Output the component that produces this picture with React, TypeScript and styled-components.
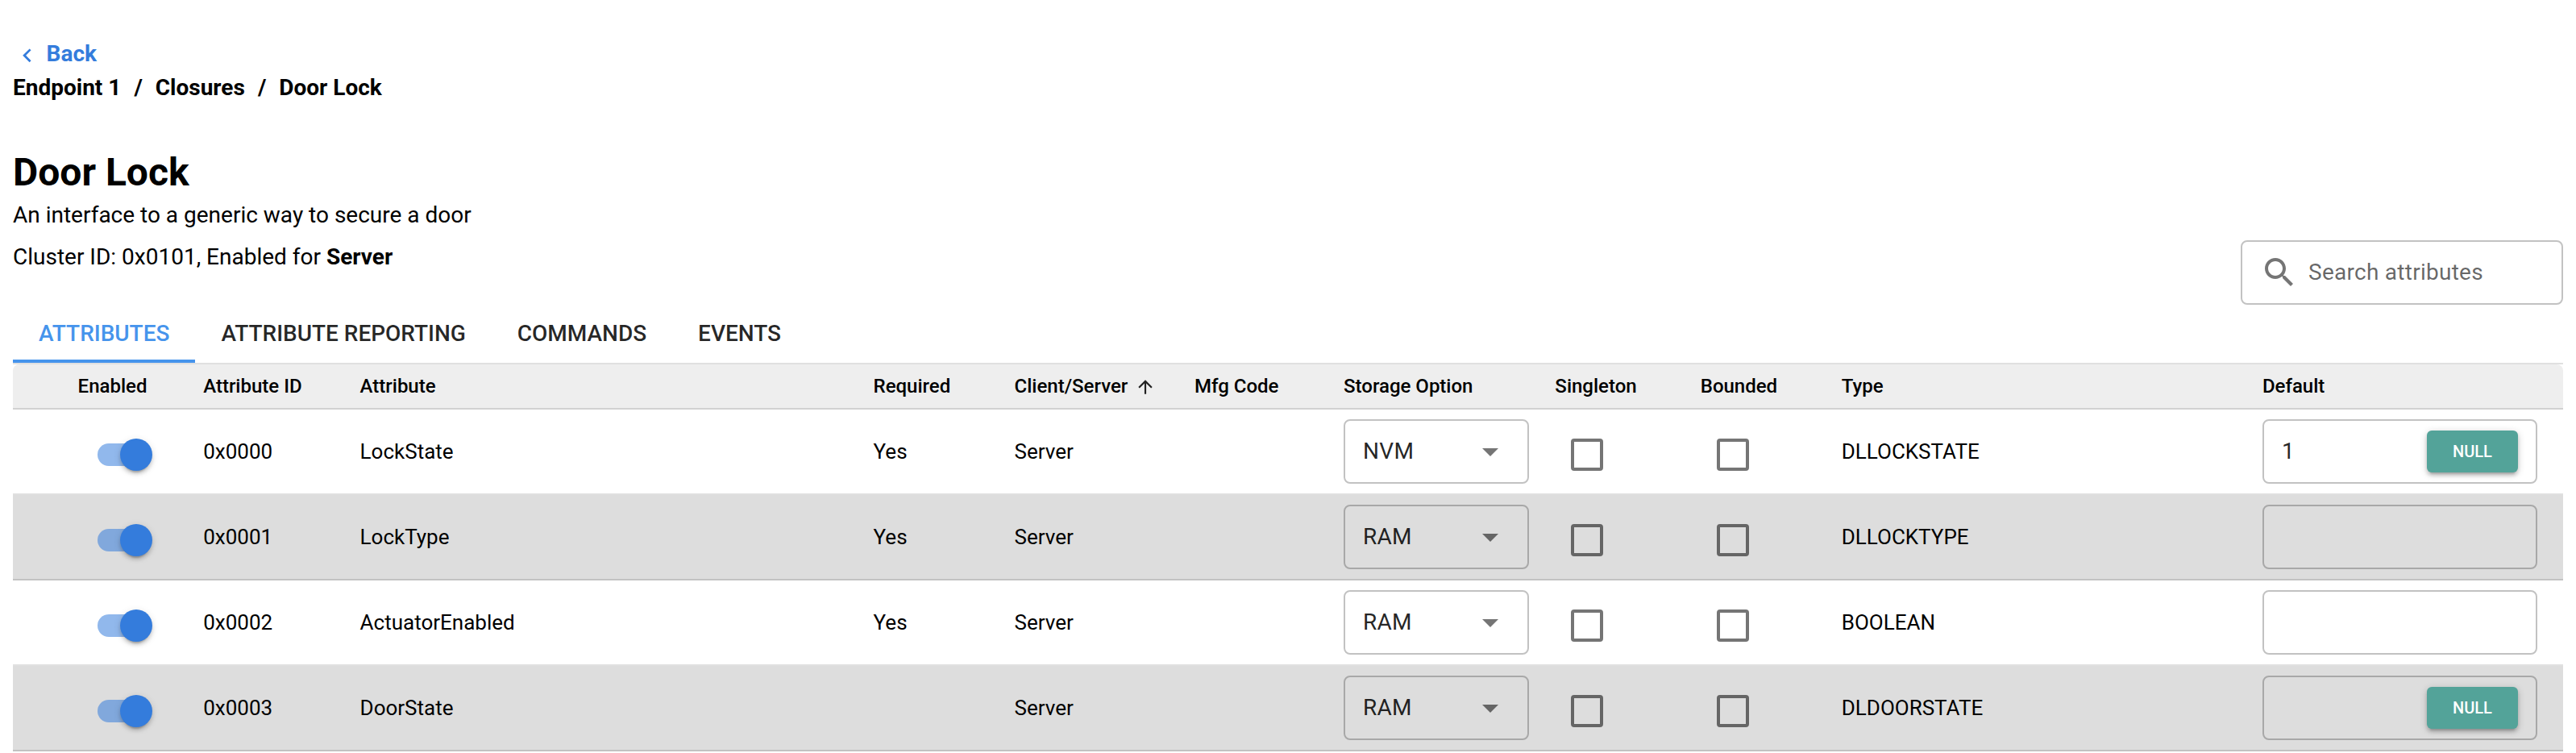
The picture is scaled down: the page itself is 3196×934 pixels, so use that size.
import React from "react";
import styled, { createGlobalStyle } from "styled-components";

const GlobalStyle = createGlobalStyle`
  body {
    margin: 0;
    background: #fff;
    color: #000;
    font-family: Roboto, "Liberation Sans", sans-serif;
    font-size: 28px;
    line-height: 42px;
  }
  *, *::before, *::after { box-sizing: border-box; }
`;

const Page = styled.main`
  padding: 46px 16px 0;
`;

const BackLink = styled.a`
  display: flex;
  align-items: center;
  gap: 7px;
  height: 42px;
  padding-left: 1px;
  color: #347cdc;
  font-weight: 700;
`;

const BackIcon = styled.svg`
  width: 33.6px;
  height: 33.6px;
  margin-top: 3px;
  fill: currentColor;
`;

const Breadcrumbs = styled.nav`
  display: flex;
  gap: 16px;
  font-weight: 700;
`;

const Header = styled.header`
  display: flex;
  justify-content: space-between;
  align-items: flex-end;
  height: 248px;
`;

const Heading = styled.div`
  padding-bottom: 38px;
`;

const Title = styled.h1`
  margin: 0;
  font-size: 48px;
  font-weight: 700;
  line-height: 64px;
`;

const Description = styled.p`
  margin: 0 0 10px;
`;

const ClusterInfo = styled.p`
  margin: 0;
`;

const Field = styled.div<{ $width: number }>`
  display: flex;
  align-items: center;
  width: ${(p) => p.$width}px;
  height: 80px;
  padding: 0 22px;
  border: 2px solid rgba(0, 0, 0, 0.24);
  border-radius: 8px;
  color: rgba(0, 0, 0, 0.87);
  font-size: 28px;
  letter-spacing: 0.00937em;
`;

const FieldText = styled.span`
  flex: 1;
`;

const SearchText = styled.span`
  margin-left: 12px;
  color: rgba(0, 0, 0, 0.6);
`;

const FieldIcon = styled.svg`
  width: 48px;
  height: 48px;
  fill: rgba(0, 0, 0, 0.54);
`;

const Tabs = styled.div`
  display: flex;
  height: 72px;
`;

const Tab = styled.div<{ $active?: boolean }>`
  padding: 0 32px;
  line-height: 72px;
  font-weight: 500;
  letter-spacing: -0.02px;
  color: ${(p) => (p.$active ? "#4694ec" : "rgba(0, 0, 0, 0.85)")};
  box-shadow: ${(p) => (p.$active ? "inset 0 -4px 0 #4694ec" : "none")};
`;

const Table = styled.div`
  border-top: 2px solid #e0e0e0;
`;

const Row = styled.div<{ $shaded?: boolean }>`
  display: grid;
  grid-template-columns: 236.2px 194.4px 637px 175px 223.4px 185.1px 262.3px 180.4px 175px 522.2px 1fr;
  align-items: center;
  height: 106px;
  border-bottom: 2px solid rgba(0, 0, 0, 0.12);
  background: ${(p) => (p.$shaded ? "#ddd" : "#fff")};
  font-size: 26px;
`;

const HeadRow = styled(Row)`
  height: 56px;
  border-radius: 8px 8px 0 0;
  background: #eee;
  font-size: 24px;
  font-weight: 500;
`;

const HeadCell = styled.div<{ $first?: boolean }>`
  display: flex;
  align-items: center;
  padding-left: ${(p) => (p.$first ? "80.6px" : "0")};
`;

const SortIcon = styled.svg`
  width: 26px;
  height: 26px;
  margin: 2px 0 0 9px;
  fill: #222;
`;

const Toggle = styled.div`
  display: flex;
  align-items: center;
  width: 68px;
  height: 40px;
  margin: 8px 0 0 105px;
`;

const ToggleTrack = styled.span`
  width: 64px;
  height: 28px;
  border-radius: 14px;
  background: rgba(52, 124, 220, 0.54);
`;

const ToggleThumb = styled.span`
  flex: none;
  width: 40px;
  height: 40px;
  margin-left: -36px;
  border-radius: 50%;
  background: #347cdc;
  box-shadow: 0 6px 2px -4px rgba(0, 0, 0, 0.2), 0 4px 4px rgba(0, 0, 0, 0.14),
    0 2px 10px rgba(0, 0, 0, 0.12);
`;

const Checkbox = styled.div`
  width: 40px;
  height: 40px;
  margin: 8px 0 0 20px;
  border: 4px solid rgba(0, 0, 0, 0.54);
  border-radius: 4px;
`;

const NullButton = styled.button`
  height: 52px;
  padding: 0 32px;
  border: 0;
  border-radius: 6px;
  background: #53a399;
  color: #fff;
  font: 500 20px/34px Roboto, sans-serif;
  box-shadow: 0 2px 10px rgba(0, 0, 0, 0.2), 0 4px 4px rgba(0, 0, 0, 0.14),
    0 6px 2px -4px rgba(0, 0, 0, 0.12);
`;

interface Attribute {
  id: string;
  name: string;
  required: boolean;
  storage: string;
  type: string;
  value: string;
  nullable: boolean;
}

const attributes: Attribute[] = [
  { id: "0x0000", name: "LockState", required: true, storage: "NVM", type: "DLLOCKSTATE", value: "1", nullable: true },
  { id: "0x0001", name: "LockType", required: true, storage: "RAM", type: "DLLOCKTYPE", value: "", nullable: false },
  { id: "0x0002", name: "ActuatorEnabled", required: true, storage: "RAM", type: "BOOLEAN", value: "", nullable: false },
  { id: "0x0003", name: "DoorState", required: false, storage: "RAM", type: "DLDOORSTATE", value: "", nullable: true },
];

const headings = [
  "Enabled", "Attribute ID", "Attribute", "Required", "Client/Server", "Mfg Code",
  "Storage Option", "Singleton", "Bounded", "Type", "Default",
];

const tabs = ["ATTRIBUTES", "ATTRIBUTE REPORTING", "COMMANDS", "EVENTS"];

function AttributeRow({ item, shaded }: { item: Attribute; shaded: boolean }) {
  return (
    <Row $shaded={shaded}>
      <Toggle>
        <ToggleTrack />
        <ToggleThumb />
      </Toggle>
      <div>{item.id}</div>
      <div>{item.name}</div>
      <div>{item.required ? "Yes" : ""}</div>
      <div>Server</div>
      <div />
      <Field $width={230}>
        <FieldText>{item.storage}</FieldText>
        <FieldIcon viewBox="0 0 24 24">
          <path d="M7 10l5 5 5-5z" />
        </FieldIcon>
      </Field>
      <Checkbox />
      <Checkbox />
      <div>{item.type}</div>
      <Field $width={341}>
        <FieldText>{item.value}</FieldText>
        {item.nullable && <NullButton>NULL</NullButton>}
      </Field>
    </Row>
  );
}

export default function App() {
  return (
    <Page>
      <GlobalStyle />
      <BackLink>
        <BackIcon viewBox="0 0 24 24">
          <path d="M15.41 7.41L14 6l-6 6 6 6 1.41-1.41L10.83 12z" />
        </BackIcon>
        Back
      </BackLink>
      <Breadcrumbs>
        <span>Endpoint 1</span>
        <span>/</span>
        <span>Closures</span>
        <span>/</span>
        <span>Door Lock</span>
      </Breadcrumbs>
      <Header>
        <Heading>
          <Title>Door Lock</Title>
          <Description>An interface to a generic way to secure a door</Description>
          <ClusterInfo>
            Cluster ID: 0x0101, Enabled for <b>Server</b>
          </ClusterInfo>
        </Heading>
        <Field $width={400}>
          <FieldIcon viewBox="0 0 24 24">
            <path d="M15.5 14h-.79l-.28-.27C15.41 12.59 16 11.11 16 9.5 16 5.91 13.09 3 9.5 3S3 5.91 3 9.5 5.91 16 9.5 16c1.61 0 3.09-.59 4.23-1.57l.27.28v.79l5 4.99L20.49 19l-4.99-5zm-6 0C7.01 14 5 11.99 5 9.5S7.01 5 9.5 5 14 7.01 14 9.5 11.99 14 9.5 14z" />
          </FieldIcon>
          <SearchText>Search attributes</SearchText>
        </Field>
      </Header>
      <Tabs>
        {tabs.map((tab, i) => (
          <Tab key={tab} $active={i === 0}>{tab}</Tab>
        ))}
      </Tabs>
      <Table>
        <HeadRow>
          {headings.map((heading, i) => (
            <HeadCell key={heading} $first={i === 0}>
              {heading}
              {heading === "Client/Server" && (
                <SortIcon viewBox="0 0 24 24">
                  <path d="M4 12l1.41 1.41L11 7.83V20h2V7.83l5.58 5.59L20 12l-8-8-8 8z" />
                </SortIcon>
              )}
            </HeadCell>
          ))}
        </HeadRow>
        {attributes.map((item, i) => (
          <AttributeRow key={item.id} item={item} shaded={i % 2 === 1} />
        ))}
      </Table>
    </Page>
  );
}
